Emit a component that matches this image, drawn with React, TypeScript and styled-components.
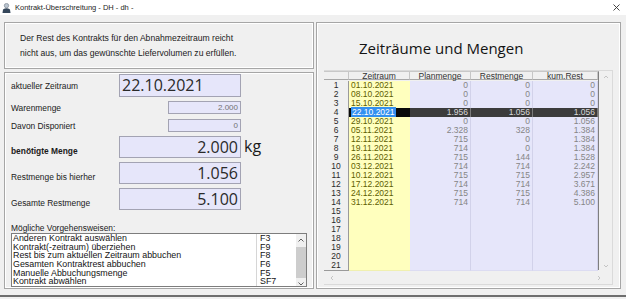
import styled, { createGlobalStyle } from 'styled-components';

type GridRow = {
	date: string;
	plan: string;
	rest: string;
	kum: string;
	selected?: boolean;
};

const tableRows: GridRow[] = [
	{ date: '01.10.2021', plan: '0', rest: '0', kum: '0' },
	{ date: '08.10.2021', plan: '0', rest: '0', kum: '0' },
	{ date: '15.10.2021', plan: '0', rest: '0', kum: '0' },
	{ date: '22.10.2021', plan: '1.956', rest: '1.056', kum: '1.056', selected: true },
	{ date: '29.10.2021', plan: '0', rest: '0', kum: '1.056' },
	{ date: '05.11.2021', plan: '2.328', rest: '328', kum: '1.384' },
	{ date: '12.11.2021', plan: '715', rest: '0', kum: '1.384' },
	{ date: '19.11.2021', plan: '714', rest: '0', kum: '1.384' },
	{ date: '26.11.2021', plan: '715', rest: '144', kum: '1.528' },
	{ date: '03.12.2021', plan: '714', rest: '714', kum: '2.242' },
	{ date: '10.12.2021', plan: '715', rest: '715', kum: '2.957' },
	{ date: '17.12.2021', plan: '714', rest: '714', kum: '3.671' },
	{ date: '24.12.2021', plan: '715', rest: '715', kum: '4.386' },
	{ date: '31.12.2021', plan: '714', rest: '714', kum: '5.100' },
	{ date: '', plan: '', rest: '', kum: '' },
	{ date: '', plan: '', rest: '', kum: '' },
	{ date: '', plan: '', rest: '', kum: '' },
	{ date: '', plan: '', rest: '', kum: '' },
	{ date: '', plan: '', rest: '', kum: '' },
	{ date: '', plan: '', rest: '', kum: '' },
	{ date: '', plan: '', rest: '', kum: '' }
];

const actions = [
	{ label: 'Anderen Kontrakt auswählen', key: 'F3' },
	{ label: 'Kontrakt(-zeitraum) überziehen', key: 'F9' },
	{ label: 'Rest bis zum aktuellen Zeitraum abbuchen', key: 'F8' },
	{ label: 'Gesamten Kontraktrest abbuchen', key: 'F6' },
	{ label: 'Manuelle Abbuchungsmenge', key: 'F5' },
	{ label: 'Kontrakt abwählen', key: 'SF7' }
];

const GlobalStyle = createGlobalStyle`
	html,
	body {
		margin: 0;
		padding: 0;
		background: #f0f0f0;
	}

	body {
		font-family: 'Liberation Sans', Arial, sans-serif;
		color: #222;
	}
`;

const Window = styled.div`
	width: 626px;
	height: 299px;
	display: flex;
	flex-direction: column;
	background: #f0f0f0;
	overflow: hidden;
`;

const TitleBar = styled.div`
	height: 15px;
	flex: none;
	background: #fff;
	display: flex;
	align-items: center;
	padding-left: 2px;
	font-size: 7.5px;
	color: #1e1e1e;
`;

const TitleIcon = styled.svg`
	width: 9px;
	height: 10px;
	margin-right: 4px;
`;

const TitleText = styled.span`
	flex: 1;
`;

const CloseButton = styled.svg`
	width: 7px;
	height: 7px;
	margin-right: 6px;
`;

const Body = styled.div`
	flex: 1;
	display: flex;
	gap: 2px;
	padding: 7px 5px 0 4px;
	min-height: 0;
`;

const Footer = styled.div`
	height: 8px;
	flex: none;
	border-bottom: 2px solid #6e6e6e;
	box-sizing: border-box;
	margin-bottom: 2px;
`;

const Frame = styled.div`
	border: 1px solid #a6a6a6;
	box-shadow: inset 1px 1px 0 #fff, inset -1px -1px 0 #fff;
	box-sizing: border-box;
`;

const LeftColumn = styled.div`
	width: 310px;
	display: flex;
	flex-direction: column;
	gap: 3px;
`;

const MessageBox = styled(Frame)`
	height: 47px;
	padding: 8px 0 0 15px;
	font-size: 8.6px;
	line-height: 15px;
	color: #1a1a1a;
`;

const FormBox = styled(Frame)`
	flex: 1;
	padding: 1px 6px 0 6px;
	display: flex;
	flex-direction: column;
`;

const FieldRow = styled.div<{ $top: number; $height: number }>`
	display: grid;
	grid-template-columns: 108px 122px auto;
	height: ${(p) => p.$height}px;
	margin-top: ${(p) => p.$top}px;
`;

const Label = styled.div<{ $bottom?: boolean; $bold?: boolean }>`
	font-size: 8.4px;
	line-height: 10px;
	font-weight: ${(p) => (p.$bold ? 'bold' : 'normal')};
	align-self: ${(p) => (p.$bottom ? 'end' : 'center')};
	padding-bottom: ${(p) => (p.$bottom ? '2px' : '0')};
	color: #1a1a1a;
`;

const Field = styled.div<{ $small?: boolean; $left?: boolean }>`
	box-sizing: border-box;
	background: #e6e6fa;
	border: 1px solid #a3a3b3;
	font-family: ${(p) => (p.$small ? "'Liberation Sans', Arial" : "'Open Sans'")}, sans-serif;
	font-size: ${(p) => (p.$small ? '8px' : '16px')};
	line-height: ${(p) => (p.$small ? '11px' : '20px')};
	color: ${(p) => (p.$small ? '#727272' : '#2a2a2a')};
	text-align: ${(p) => (p.$left ? 'left' : 'right')};
	padding: 0 2px;
	width: ${(p) => (p.$small ? '73px' : '122px')};
	justify-self: end;
	white-space: nowrap;
`;

const Unit = styled.div`
	font-family: 'Open Sans', sans-serif;
	font-size: 16px;
	line-height: 20px;
	padding-left: 3px;
	color: #1a1a1a;
`;

const ListCaption = styled.div`
	margin-top: 14px;
	font-size: 8.4px;
	line-height: 9px;
	color: #1a1a1a;
`;

const ListBox = styled.div`
	width: 296px;
	height: 54px;
	box-sizing: border-box;
	border: 1px solid #7d7d7d;
	background: #fff;
	display: flex;
`;

const ListItems = styled.div`
	flex: 1;
	position: relative;
`;

const ListDivider = styled.div`
	position: absolute;
	left: 244px;
	top: 0;
	bottom: 0;
	border-left: 1px solid #d6d6d6;
`;

const ListItem = styled.div`
	display: grid;
	grid-template-columns: 245px auto;
	height: 8.67px;
	font-size: 8.9px;
	line-height: 8.67px;
	padding-left: 1px;
	color: #141414;
	white-space: nowrap;
`;

const ListKey = styled.span`
	padding-left: 2px;
`;

const VScroll = styled.div`
	width: 10px;
	flex: none;
	background: #f0f0f0;
	display: flex;
	flex-direction: column;
	align-items: center;
`;

const ScrollArrow = styled.svg`
	width: 6px;
	height: 4px;
	flex: none;
	margin: 4px 0;
`;

const ScrollTrack = styled.div`
	flex: 1;
	width: 100%;
	display: flex;
	flex-direction: column;
`;

const ScrollThumb = styled.div`
	margin-top: 1px;
	height: 31px;
	width: 100%;
	background: #cdcdcd;
`;

const RightPanel = styled(Frame)`
	flex: 1;
	display: flex;
	flex-direction: column;
	padding: 0 0 3px 7px;
`;

const PanelTitle = styled.div`
	height: 49px;
	box-sizing: border-box;
	padding: 15px 0 0 35px;
	font-family: 'Open Sans', sans-serif;
	font-size: 15px;
	line-height: 20px;
	color: #141414;
`;

const GridWidget = styled.div`
	width: 289px;
	height: 215px;
	box-sizing: border-box;
	border: 1px solid #dadada;
	border-left: none;
	display: grid;
	grid-template-columns: 275px 13px;
	grid-template-rows: 199px 15px;
`;

const Grid = styled.div`
	box-sizing: border-box;
	border-right: 1px solid #7e7e7e;
	border-bottom: 1px solid #7e7e7e;
	border-top: 1px solid #c8c8c8;
	background: #f0f0f0;
`;

const GridLine = styled.div`
	display: grid;
	grid-template-columns: 25px 61px 61px 62px 65px;
	height: 9px;
	font-size: 8.5px;
	line-height: 9px;
	white-space: nowrap;
`;

const HeaderCell = styled.div`
	box-sizing: border-box;
	height: 8px;
	line-height: 8px;
	text-align: center;
	color: #333;
	border-right: 1px solid #c6c6c6;
	border-bottom: 1px solid #a8a8a8;
	background: #f0f0f0;
`;

const RowNumber = styled.div`
	box-sizing: border-box;
	text-align: center;
	color: #2a2a2a;
	border-right: 1px solid #9a9a9a;
	border-bottom: 1px solid #9a9a9a;
	background: #f0f0f0;
`;

const DateCell = styled.div<{ $selected?: boolean }>`
	box-sizing: border-box;
	padding-left: 2px;
	color: #5e5e00;
	background: ${(p) => (p.$selected ? '#0a0a0a' : '#ffffbe')};
	border-bottom: 1px solid ${(p) => (p.$selected ? '#0a0a0a' : '#f0f0b0')};
`;

const DateMark = styled.span`
	background: #3390f0;
	color: #fff;
	padding: 0 1px;
`;

const NumberCell = styled.div<{ $selected?: boolean }>`
	box-sizing: border-box;
	text-align: right;
	padding-right: 2px;
	color: ${(p) => (p.$selected ? '#d8d8d8' : '#858585')};
	background: ${(p) => (p.$selected ? '#3c3c3c' : '#e6e6fa')};
	border-right: 1px solid ${(p) => (p.$selected ? '#7a7a7a' : '#d2d2ea')};
	border-bottom: 1px solid ${(p) => (p.$selected ? '#3c3c3c' : '#dcdcf2')};
`;

const GridVScroll = styled.div`
	display: flex;
	flex-direction: column;
	justify-content: space-between;
	align-items: center;
	padding: 3px 0 1px;
`;

const GridHScroll = styled.div`
	grid-column: 1 / 3;
	display: flex;
	justify-content: space-between;
	align-items: center;
	padding: 0 10px 0 5px;
`;

const FadedArrow = styled.svg`
	width: 6px;
	height: 6px;
`;

const ArrowUp = () => (
	<ScrollArrow viewBox="0 0 6 4">
		<path d="M0.5 3.5 L3 1 L5.5 3.5" fill="none" stroke="#606060" strokeWidth="1" />
	</ScrollArrow>
);

const ArrowDown = () => (
	<ScrollArrow viewBox="0 0 6 4">
		<path d="M0.5 0.5 L3 3 L5.5 0.5" fill="none" stroke="#606060" strokeWidth="1" />
	</ScrollArrow>
);

const App = () => {
	return (
		<Window>
			<GlobalStyle />
			<TitleBar>
				<TitleIcon viewBox="0 0 9 10">
					<circle cx="4.5" cy="2.6" r="2.2" fill="#b9c4cf" stroke="#6d7784" strokeWidth="0.6" />
					<path d="M0.5 10 L1 6.4 Q4.5 4.2 8 6.4 L8.5 10 Z" fill="#34465a" />
				</TitleIcon>
				<TitleText>Kontrakt-Überschreitung - DH - dh -</TitleText>
				<CloseButton viewBox="0 0 7 7">
					<path d="M0.5 0.5 L6.5 6.5 M6.5 0.5 L0.5 6.5" stroke="#333" strokeWidth="0.9" />
				</CloseButton>
			</TitleBar>

			<Body>
				<LeftColumn>
					<MessageBox>
						Der Rest des Kontrakts für den Abnahmezeitraum reicht
						<br />
						nicht aus, um das gewünschte Liefervolumen zu erfüllen.
					</MessageBox>

					<FormBox>
						<FieldRow $top={0} $height={23}>
							<Label>aktueller Zeitraum</Label>
							<Field $left>22.10.2021</Field>
						</FieldRow>
						<FieldRow $top={4} $height={13}>
							<Label>Warenmenge</Label>
							<Field $small>2.000</Field>
						</FieldRow>
						<FieldRow $top={5} $height={13}>
							<Label>Davon Disponiert</Label>
							<Field $small>0</Field>
						</FieldRow>
						<FieldRow $top={4} $height={22}>
							<Label $bottom $bold>
								benötigte Menge
							</Label>
							<Field>2.000</Field>
							<Unit>kg</Unit>
						</FieldRow>
						<FieldRow $top={4} $height={22}>
							<Label $bottom>Restmenge bis hierher</Label>
							<Field>1.056</Field>
						</FieldRow>
						<FieldRow $top={4} $height={22}>
							<Label $bottom>Gesamte Restmenge</Label>
							<Field>5.100</Field>
						</FieldRow>

						<ListCaption>Mögliche Vorgehensweisen:</ListCaption>
						<ListBox>
							<ListItems>
								<ListDivider />
								{actions.map((a) => (
									<ListItem key={a.key}>
										<span>{a.label}</span>
										<ListKey>{a.key}</ListKey>
									</ListItem>
								))}
							</ListItems>
							<VScroll>
								<ArrowUp />
								<ScrollTrack>
									<ScrollThumb />
								</ScrollTrack>
								<ArrowDown />
							</VScroll>
						</ListBox>
					</FormBox>
				</LeftColumn>

				<RightPanel>
					<PanelTitle>Zeiträume und Mengen</PanelTitle>
					<GridWidget>
						<Grid>
							<GridLine>
								<HeaderCell />
								<HeaderCell>Zeitraum</HeaderCell>
								<HeaderCell>Planmenge</HeaderCell>
								<HeaderCell>Restmenge</HeaderCell>
								<HeaderCell>kum.Rest</HeaderCell>
							</GridLine>
							{tableRows.map((r, i) => (
								<GridLine key={i}>
									<RowNumber>{i + 1}</RowNumber>
									<DateCell $selected={r.selected}>
										{r.selected ? <DateMark>{r.date}</DateMark> : r.date}
									</DateCell>
									<NumberCell $selected={r.selected}>{r.plan}</NumberCell>
									<NumberCell $selected={r.selected}>{r.rest}</NumberCell>
									<NumberCell $selected={r.selected}>{r.kum}</NumberCell>
								</GridLine>
							))}
						</Grid>
						<GridVScroll>
							<FadedArrow viewBox="0 0 6 6">
								<path d="M1 4 L3 2 L5 4" fill="none" stroke="#c4c4c4" strokeWidth="1" />
							</FadedArrow>
							<FadedArrow viewBox="0 0 6 6">
								<path d="M1 2 L3 4 L5 2" fill="none" stroke="#c4c4c4" strokeWidth="1" />
							</FadedArrow>
						</GridVScroll>
						<GridHScroll>
							<FadedArrow viewBox="0 0 6 6">
								<path d="M4 1 L2 3 L4 5" fill="none" stroke="#c4c4c4" strokeWidth="1" />
							</FadedArrow>
							<FadedArrow viewBox="0 0 6 6">
								<path d="M2 1 L4 3 L2 5" fill="none" stroke="#c4c4c4" strokeWidth="1" />
							</FadedArrow>
						</GridHScroll>
					</GridWidget>
				</RightPanel>
			</Body>
			<Footer />
		</Window>
	);
};

export default App;
